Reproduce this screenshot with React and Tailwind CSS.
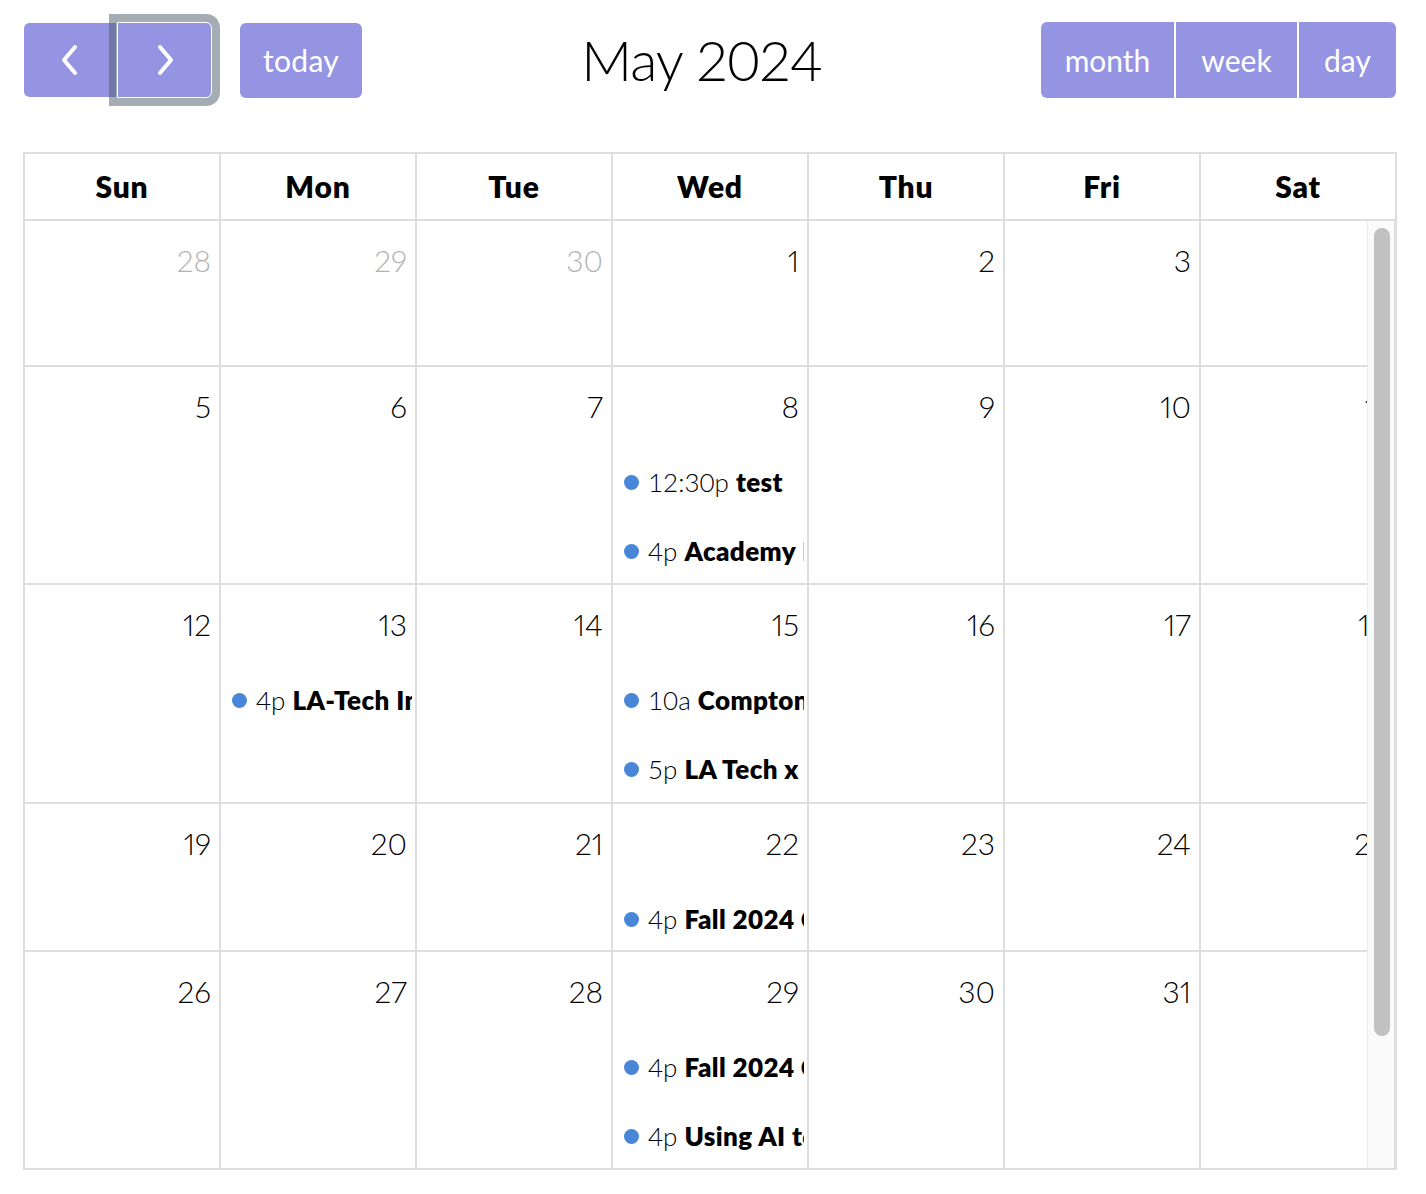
import React from 'react';

const FONT = { fontFamily: 'Lato, "Noto Sans", sans-serif' };

const dayNames = ['Sun', 'Mon', 'Tue', 'Wed', 'Thu', 'Fri', 'Sat'];

const weeks = [
    [{ d: 28, other: true }, { d: 29, other: true }, { d: 30, other: true }, { d: 1 }, { d: 2 }, { d: 3 }, { d: 4 }],
    [{ d: 5 }, { d: 6 }, { d: 7 }, { d: 8 }, { d: 9 }, { d: 10 }, { d: 11 }],
    [{ d: 12 }, { d: 13 }, { d: 14 }, { d: 15 }, { d: 16 }, { d: 17 }, { d: 18 }],
    [{ d: 19 }, { d: 20 }, { d: 21 }, { d: 22 }, { d: 23 }, { d: 24 }, { d: 25 }],
    [{ d: 26 }, { d: 27 }, { d: 28 }, { d: 29 }, { d: 30 }, { d: 31 }, { d: 1, other: true }],
];

// row heights incl. bottom border
const rowHeights = ['h-[146px]', 'h-[218px]', 'h-[219px]', 'h-[148px]', 'h-[216px]'];

const events = {
    8: [
        { time: '12:30p', title: 'test' },
        { time: '4p', title: 'Academy Info Session' },
    ],
    13: [{ time: '4p', title: 'LA-Tech Info Night' }],
    15: [
        { time: '10a', title: 'Compton College Visit' },
        { time: '5p', title: 'LA Tech x Community Meetup' },
    ],
    22: [{ time: '4p', title: 'Fall 2024 Cohort Orientation' }],
    29: [
        { time: '4p', title: 'Fall 2024 Cohort Orientation' },
        { time: '4p', title: 'Using AI to Build Your Resume' },
    ],
};

function Chevron({ dir }) {
    return (
        <svg width="22" height="32" viewBox="0 0 22 32" fill="none">
            <path
                d={dir === 'left' ? 'M16 3 L5 16 L16 29' : 'M6 3 L17 16 L6 29'}
                stroke="white"
                strokeWidth="4"
                strokeLinecap="round"
                strokeLinejoin="round"
            />
        </svg>
    );
}

function Toolbar() {
    return (
        <div className="flex items-center justify-between h-[76px] ml-[24px] mr-[30px]">
            <div className="flex items-center gap-[28px]">
                <div className="flex h-[76px]">
                    <button className="w-[93px] h-full flex items-center justify-center bg-[#9594e3] rounded-l-[6px] border border-white border-l-0">
                        <Chevron dir="left" />
                    </button>
                    <button className="relative w-[95px] h-full flex items-center justify-center bg-[#9594e3] rounded-r-[6px] border border-white shadow-[0_0_0_8px_rgba(76,91,106,0.5)]">
                        <Chevron dir="right" />
                    </button>
                </div>
                <button className="h-[75px] px-[23px] bg-[#9594e3] rounded-[6px] text-white text-[30px] tracking-[0.3px]">
                    today
                </button>
            </div>
            <h2 className="text-[56px] font-light text-black tracking-[-1px]">May 2024</h2>
            <div className="flex h-[76px] rounded-[6px] overflow-hidden">
                <button className="w-[135px] h-full bg-[#9594e3] text-white text-[30px] border-r-2 border-white">month</button>
                <button className="w-[123px] h-full bg-[#9594e3] text-white text-[30px] border-r-2 border-white">week</button>
                <button className="w-[97px] h-full bg-[#9594e3] text-white text-[30px]">day</button>
            </div>
        </div>
    );
}

function EventRow({ ev }) {
    return (
        <div className="h-[69px] flex items-center pl-[11px] mr-[3px] overflow-hidden whitespace-nowrap text-[26px] text-black">
            <span className="shrink-0 w-[15px] h-[15px] rounded-full bg-[#4a86d8] mr-[9px]" />
            <span className="font-light">{ev.time}</span>
            <span className="font-extrabold ml-[7px] tracking-[0.4px]">{ev.title}</span>
        </div>
    );
}

function DayCell({ day, rowIdx, last }) {
    const evs = !day.other ? events[day.d] || [] : [];
    return (
        <div
            className={`${rowHeights[rowIdx]} border-r-2 border-[#ddd] ${last ? '' : 'border-b-2'} overflow-hidden`}
        >
            <div className="h-[78px] flex items-center justify-end pr-[8px]">
                <span className={`text-[30px] font-light proportional-nums ${day.other ? 'text-[#b3b3b3]' : 'text-black'}`}>
                    {day.d}
                </span>
            </div>
            <div className="mt-[3px]">
                {evs.map((ev, i) => (
                    <EventRow key={i} ev={ev} />
                ))}
            </div>
        </div>
    );
}

export default function App() {
    return (
        <div className="min-h-screen bg-white pt-[22px]" style={FONT}>
            <Toolbar />
            <div className="w-[1374px] ml-[23px] mt-[54px] border-l-2 border-t-2 border-b-2 border-[#ddd]">
                <div className="grid grid-cols-7">
                    {dayNames.map((n) => (
                        <div
                            key={n}
                            className="h-[67px] flex items-center justify-center border-r-2 border-b-2 border-[#ddd] text-[30px] font-extrabold tracking-[0.8px] text-black"
                        >
                            {n}
                        </div>
                    ))}
                </div>
                <div className="relative overflow-hidden">
                    <div className="grid grid-cols-7">
                        {weeks.map((week, r) =>
                            week.map((day, c) => (
                                <DayCell key={`${r}-${c}`} day={day} rowIdx={r} last={r === weeks.length - 1} />
                            ))
                        )}
                    </div>
                    {/* scrollbar */}
                    <div className="absolute top-0 right-0 bottom-0 w-[30px] bg-[#fafafa] border-l border-[#ececec] border-r-[3px] border-r-[#dedede]">
                        <div className="absolute left-[6px] top-[7px] w-[16px] h-[808px] rounded-full bg-[#c1c1c1]" />
                    </div>
                </div>
            </div>
        </div>
    );
}
